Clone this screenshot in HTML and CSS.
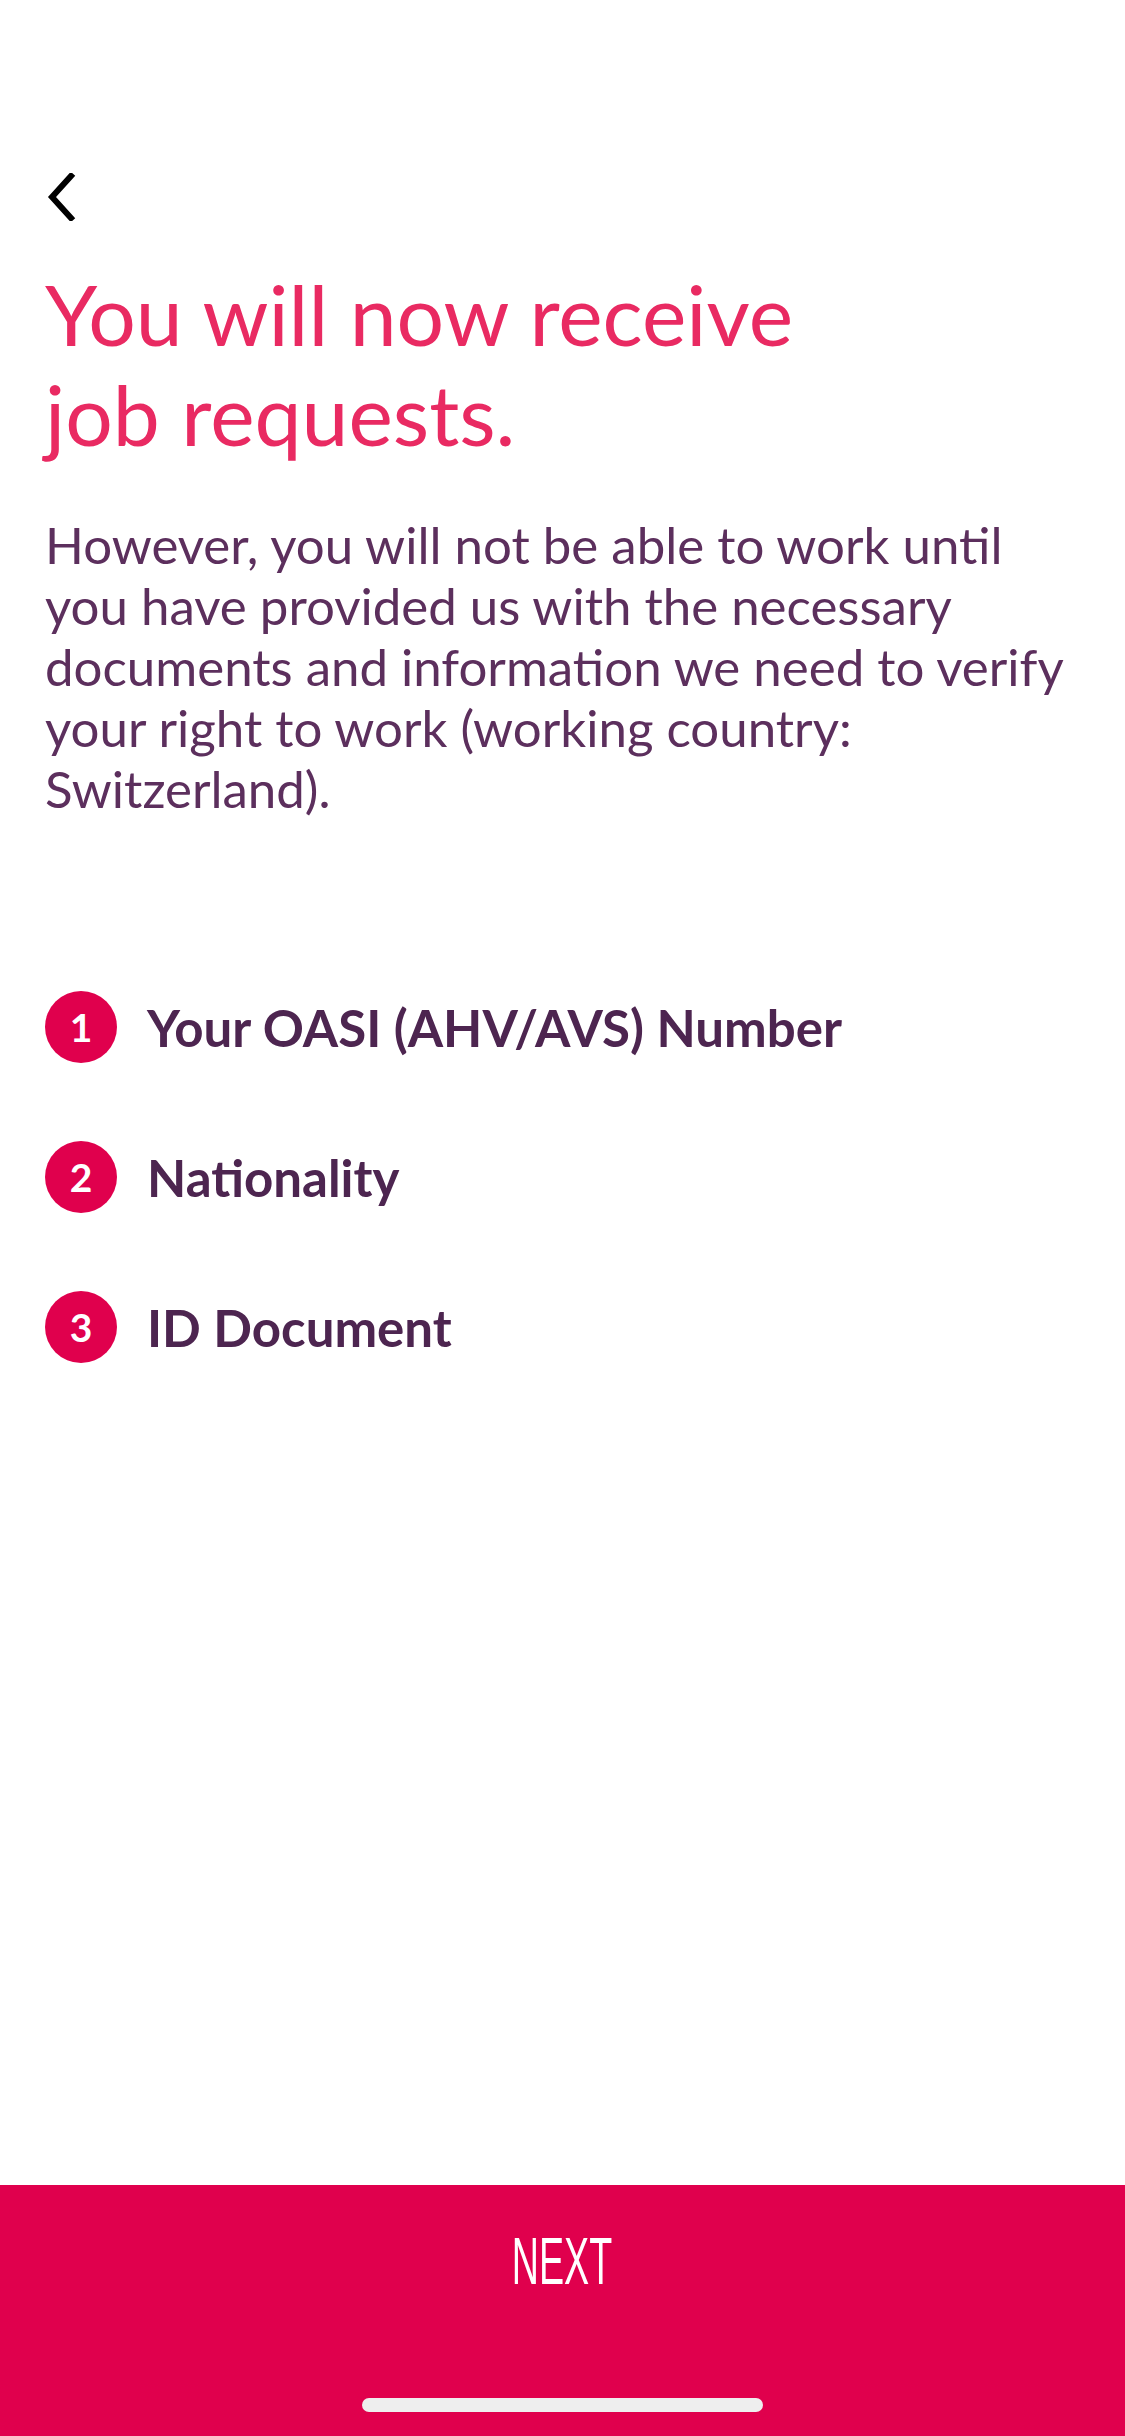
FILE: index.html
```html
<!DOCTYPE html>
<html lang="en">
<head>
<meta charset="utf-8">
<title>Job requests</title>
<link rel="stylesheet" href="styles.css">
</head>
<body>
<div class="screen">
  <main class="content">
    <header class="topbar">
      <button class="back" aria-label="Back">
        <svg width="30" height="48" viewBox="0 0 30 48"><path d="M24 3 L5 24 L24 45" fill="none" stroke="#000" stroke-width="6" stroke-linecap="square" stroke-linejoin="miter"/></svg>
      </button>
    </header>
    <h1 class="title">You will now receive<br>job requests.</h1>
    <p class="lead">However, you will not be able to work until you have provided us with the necessary documents and information we need to verify your right to work (working country: Switzerland).</p>
    <ol class="steps">
      <li class="step"><span class="num">1</span><span class="label">Your OASI (AHV/AVS) Number</span></li>
      <li class="step"><span class="num">2</span><span class="label">Nationality</span></li>
      <li class="step"><span class="num">3</span><span class="label">ID Document</span></li>
    </ol>
  </main>
  <footer class="footer">
    <button class="next"><span class="next-text">NEXT</span></button>
    <div class="home-indicator"></div>
  </footer>
</div>
</body>
</html>
```
FILE: styles.css
```css
html, body {
  margin: 0;
  padding: 0;
  background: #ffffff;
}
body {
  font-family: "Lato", "Noto Sans", sans-serif;
}
.screen {
  width: 1125px;
  height: 2436px;
  display: flex;
  flex-direction: column;
  overflow: hidden;
}
.content {
  flex: 1;
  padding: 0 45px;
  display: flex;
  flex-direction: column;
}
.topbar {
  padding-top: 173px;
  height: 48px;
}
.back {
  border: 0;
  background: none;
  padding: 0;
  margin-left: 2px;
  width: 30px;
  height: 48px;
  display: block;
}
.back svg { display: block; }
.title {
  margin: 43px 0 0 0;
  font-weight: 400;
  font-size: 84px;
  line-height: 100px;
  color: #e92a62;
  letter-spacing: 0;
}
.lead {
  margin: 50px 0 0 0;
  font-size: 51px;
  line-height: 61px;
  color: #5c2f5d;
}
.steps {
  list-style: none;
  margin: 172px 0 0 0;
  padding: 0;
  display: flex;
  flex-direction: column;
  gap: 78px;
}
.step {
  display: flex;
  align-items: center;
  height: 72px;
  gap: 30px;
}
.num {
  width: 72px;
  height: 72px;
  flex: none;
  border-radius: 50%;
  background: #e0004d;
  color: #fff;
  font-weight: 700;
  font-size: 39px;
  display: flex;
  align-items: center;
  justify-content: center;
}
.label {
  font-weight: 700;
  font-size: 51px;
  color: #4d2550;
}
.footer {
  height: 251px;
  background: #e0004d;
  display: flex;
  flex-direction: column;
  align-items: center;
}
.next {
  border: 0;
  background: none;
  padding: 0;
  margin-top: 36px;
  height: 80px;
  display: flex;
  align-items: center;
  justify-content: center;
  width: 100%;
}
.next-text {
  display: inline-block;
  font-family: "Liberation Sans", Arial, sans-serif;
  font-size: 66px;
  color: #fff;
  transform: scaleX(0.57);
}
.home-indicator {
  margin-top: 97px;
  width: 401px;
  height: 14px;
  border-radius: 7px;
  background: #eeeeee;
}
```
